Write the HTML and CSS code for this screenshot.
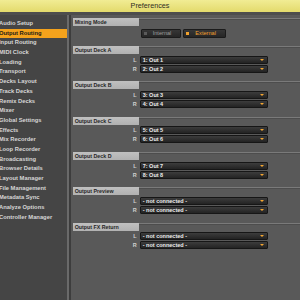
FILE: index.html
```html
<!DOCTYPE html>
<html lang="en">
<head>
  <meta charset="UTF-8">
  <title>Preferences</title>
  <link rel="stylesheet" href="styles.css">
</head>
<body>

<div id="titlebar">Preferences</div>

<div id="window">
  <ul id="sidebar">
    <li>Audio Setup</li>
    <li class="active">Output Routing</li>
    <li>Input Routing</li>
    <li>MIDI Clock</li>
    <li>Loading</li>
    <li>Transport</li>
    <li>Decks Layout</li>
    <li>Track Decks</li>
    <li>Remix Decks</li>
    <li>Mixer</li>
    <li>Global Settings</li>
    <li>Effects</li>
    <li>Mix Recorder</li>
    <li>Loop Recorder</li>
    <li>Broadcasting</li>
    <li>Browser Details</li>
    <li>Layout Manager</li>
    <li>File Management</li>
    <li>Metadata Sync</li>
    <li>Analyze Options</li>
    <li>Controller Manager</li>
  </ul>

  <div id="panel">
    <div class="section mixing">
      <div class="head"><span class="label">Mixing Mode</span><span class="rule"></span></div>
      <div class="toggle">
        <div class="opt"><span class="led"></span>Internal</div>
        <div class="opt on"><span class="led"></span>External</div>
      </div>
    </div>

    <div class="section">
      <div class="head"><span class="label">Output Deck A</span><span class="rule"></span></div>
      <div class="row"><span class="ch">L</span><div class="select">1: Out 1<span class="arrow"></span></div></div>
      <div class="row"><span class="ch">R</span><div class="select">2: Out 2<span class="arrow"></span></div></div>
    </div>

    <div class="section">
      <div class="head"><span class="label">Output Deck B</span><span class="rule"></span></div>
      <div class="row"><span class="ch">L</span><div class="select">3: Out 3<span class="arrow"></span></div></div>
      <div class="row"><span class="ch">R</span><div class="select">4: Out 4<span class="arrow"></span></div></div>
    </div>

    <div class="section">
      <div class="head"><span class="label">Output Deck C</span><span class="rule"></span></div>
      <div class="row"><span class="ch">L</span><div class="select">5: Out 5<span class="arrow"></span></div></div>
      <div class="row"><span class="ch">R</span><div class="select">6: Out 6<span class="arrow"></span></div></div>
    </div>

    <div class="section">
      <div class="head"><span class="label">Output Deck D</span><span class="rule"></span></div>
      <div class="row"><span class="ch">L</span><div class="select">7: Out 7<span class="arrow"></span></div></div>
      <div class="row"><span class="ch">R</span><div class="select">8: Out 8<span class="arrow"></span></div></div>
    </div>

    <div class="section">
      <div class="head"><span class="label">Output Preview</span><span class="rule"></span></div>
      <div class="row"><span class="ch">L</span><div class="select">- not connected -<span class="arrow"></span></div></div>
      <div class="row"><span class="ch">R</span><div class="select">- not connected -<span class="arrow"></span></div></div>
    </div>

    <div class="section">
      <div class="head"><span class="label">Output FX Return</span><span class="rule"></span></div>
      <div class="row"><span class="ch">L</span><div class="select">- not connected -<span class="arrow"></span></div></div>
      <div class="row"><span class="ch">R</span><div class="select">- not connected -<span class="arrow"></span></div></div>
    </div>
  </div>
</div>

</body>
</html>
```

FILE: styles.css
```css
body {
  margin: 0;
  width: 300px;
  height: 300px;
  overflow: hidden;
  background-color: #595959;
  font-family: 'Liberation Sans', Arial, sans-serif;
}

#titlebar {
  height: 12px;
  line-height: 12px;
  text-align: center;
  font-size: 7.2px;
  color: #2e2e22;
  background: linear-gradient(#f1ec94, #e3da6c);
  border-bottom: 3px solid #4d4d4d;
}

#window {
  display: flex;
  height: 285px;
}

#sidebar {
  list-style: none;
  margin: 0;
  padding: 4px 0 0 0;
  width: 67px;
  background-color: #454545;
  border-right: 2px solid #6a6a6a;
}

#sidebar li {
  height: 9.7px;
  line-height: 9.7px;
  font-size: 5.8px;
  font-weight: bold;
  color: #d6d6d6;
  text-indent: -1px;
  white-space: nowrap;
}

#sidebar li.active {
  background-color: #f4a21c;
  color: #1c1a14;
}

#panel {
  flex: 1;
  padding: 2.7px 0 0 1.7px;
  border-left: 2px solid #3d3d3d;
}

.section {
  margin-bottom: 9.3px;
}

.section.mixing {
  margin-bottom: 8px;
}

.head {
  display: flex;
  height: 8px;
}

.label {
  width: 64px;
  padding-left: 2px;
  line-height: 8px;
  font-size: 5.3px;
  font-weight: bold;
  color: #262626;
  background: linear-gradient(#c0c0c0, #b1b1b1);
}

.rule {
  flex: 1;
  height: 1px;
  background-color: #7a7a7a;
  box-shadow: 0 1px 0 #4d4d4d;
}

.toggle {
  display: flex;
  gap: 2px;
  margin: 3px 0 0 68px;
}

.opt {
  display: flex;
  align-items: center;
  height: 7.5px;
  padding: 0 9px 0 2px;
  font-size: 5.6px;
  color: #9e9e9e;
  background: linear-gradient(#363636, #262626);
  border: 0.5px solid #1b1b1b;
  border-radius: 1px;
}

.opt .led {
  width: 3px;
  height: 3px;
  margin-right: 6px;
  background-color: #5a5a5a;
}

.opt.on {
  color: #f2a22e;
}

.opt.on .led {
  background-color: #f2a22e;
}

.row {
  display: flex;
  align-items: center;
  height: 7px;
  margin-top: 2px;
}

.ch {
  width: 64px;
  padding-right: 3px;
  text-align: right;
  font-size: 5.5px;
  font-weight: bold;
  color: #d0d0d0;
}

.select {
  position: relative;
  width: 124px;
  height: 6px;
  line-height: 6px;
  padding-left: 2px;
  font-size: 5.5px;
  font-weight: bold;
  color: #ececec;
  white-space: nowrap;
  background: linear-gradient(#3c3c3c, #232323);
  border: 0.5px solid #161616;
  border-radius: 1px;
}

.arrow {
  position: absolute;
  right: 3px;
  top: 2px;
  width: 0;
  height: 0;
  border-left: 2px solid transparent;
  border-right: 2px solid transparent;
  border-top: 2.5px solid #f4a630;
}
```
